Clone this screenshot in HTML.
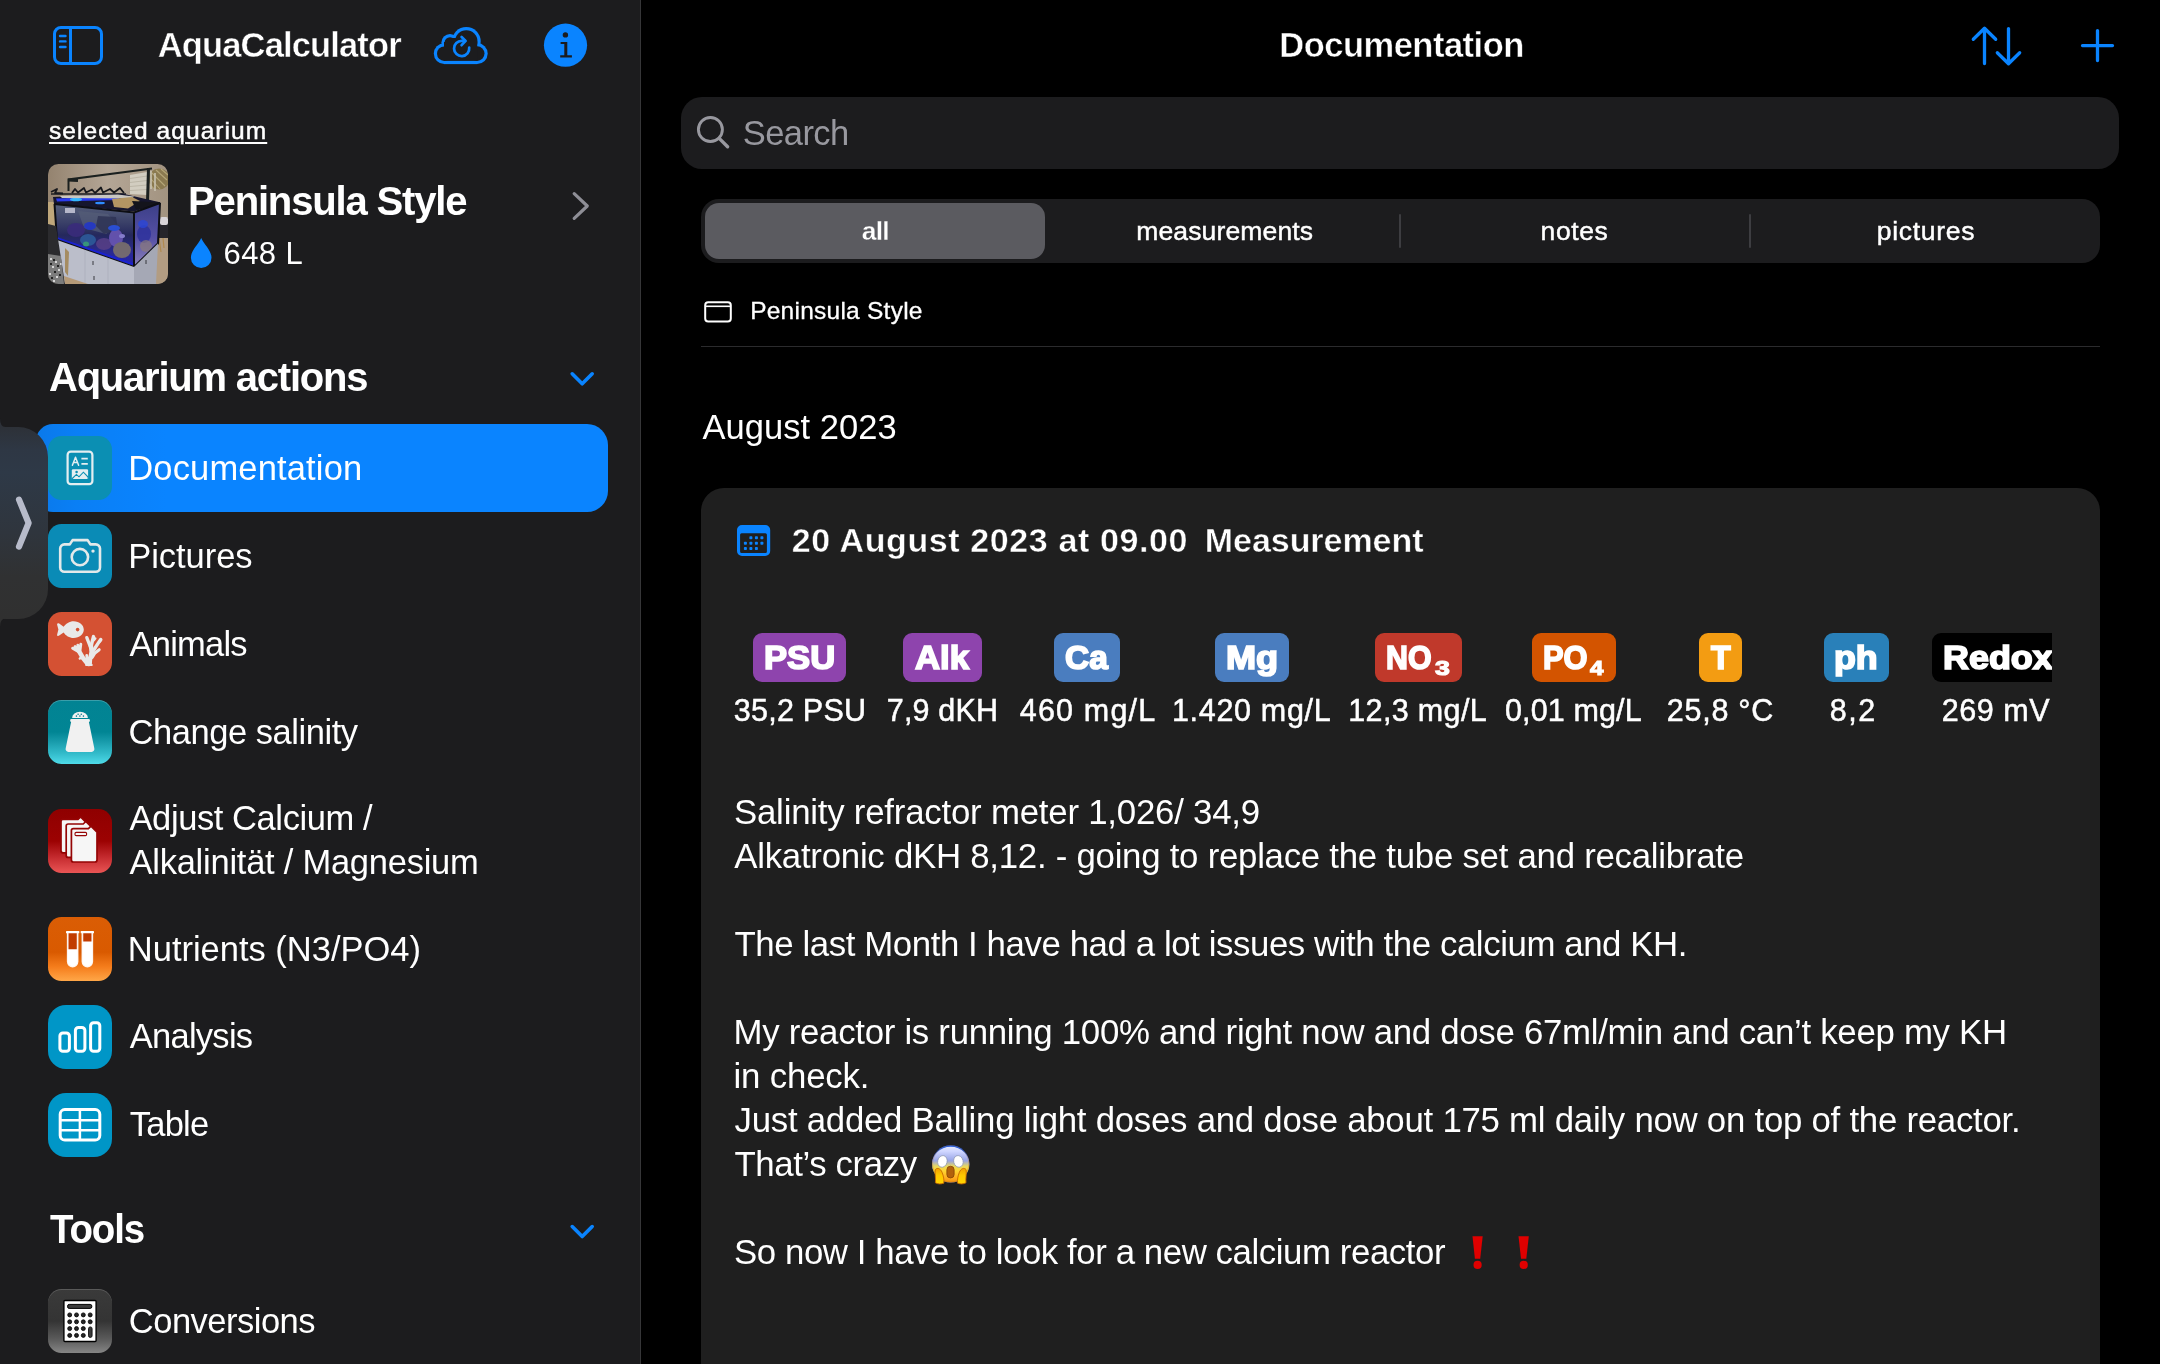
<!DOCTYPE html>
<html lang="en">
<head>
<meta charset="utf-8">
<title>AquaCalculator – Documentation</title>
<style>
*{box-sizing:border-box;margin:0;padding:0}
html,body{width:2160px;height:1364px;overflow:hidden;background:#000}
body{position:relative;font-family:"Liberation Sans",sans-serif;color:#fff}
.b{position:absolute}
.t{position:absolute;white-space:pre;line-height:1;transform-origin:0 50%;color:#fff}
#sb{left:0;top:0;width:640px;height:1364px;background:#1c1c1e}
#div{left:640px;top:0;width:1px;height:1364px;background:#363638}
#sel{left:35.5px;top:424px;width:572.5px;height:88px;border-radius:17px 21px 21px 17px;background:linear-gradient(90deg,#0a79ea 0,#0a7ff5 40px,#0a84ff 130px)}
#tab{left:-40px;top:427px;width:87.7px;height:191.5px;border-radius:30px;background:linear-gradient(180deg,#2d3138 0%,#2e3744 12%,#2e3947 24%,#2f353d 55%,#303132 78%,#303030 100%)}
.ic{position:absolute;left:48px;width:64px;height:64px;border-radius:13.5px}
#search{left:681px;top:97px;width:1438px;height:72px;border-radius:21px;background:#1c1c1e}
#seg{left:701px;top:199px;width:1399px;height:64px;border-radius:18px;background:#1c1c1e}
#segsel{left:705px;top:203px;width:340px;height:56px;border-radius:14px;background:#5b5b60}
.sd{position:absolute;top:213.5px;width:2px;height:34.5px;background:#3d3d41;border-radius:1px}
#sep{left:701px;top:346px;width:1399px;height:1px;background:#2b2b2d}
#card{left:701px;top:488px;width:1399px;height:900px;border-radius:23px;background:#1f1f1f}
#rowclip{left:0;top:0;width:2052px;height:1364px;overflow:hidden;will-change:transform}
#tx{left:0;top:0;width:2160px;height:1364px;will-change:transform}
.bd{position:absolute;top:633px;height:49px;border-radius:9px}
</style>
</head>
<body>
<!-- ================= SIDEBAR ================= -->
<div id="sb" class="b"></div>
<div id="div" class="b"></div>
<div id="sel" class="b"></div>
<div id="tab" class="b"></div>

<!-- icon tiles -->
<div class="ic" style="top:436px;background:#0b8fb3"></div>
<div class="ic" style="top:524px;background:#0a8bb6"></div>
<div class="ic" style="top:612px;background:#d45133"></div>
<div class="ic" style="top:700px;background:linear-gradient(180deg,#028393 0%,#018594 50%,#1a9dad 66%,#33bccb 84%,#4fdbe9 100%);box-shadow:inset 0 1px 0 rgba(255,255,255,.22)"></div>
<div class="ic" style="top:809px;background:linear-gradient(180deg,#8f0000 0%,#9c0202 50%,#c42a2e 75%,#ea5555 100%)"></div>
<div class="ic" style="top:917px;background:linear-gradient(180deg,#da5d05 0%,#d95a00 55%,#f57d1c 78%,#ffa748 100%)"></div>
<div class="ic" style="top:1005px;background:#0096c7;border-radius:18px"></div>
<div class="ic" style="top:1093px;background:#0096c7;border-radius:18px"></div>
<div class="ic" style="top:1289px;background:linear-gradient(180deg,#3a3a3a 0%,#343434 50%,#5a5a5a 78%,#868686 100%);box-shadow:inset 0 1px 0 rgba(255,255,255,.16)"></div>

<!-- ================= MAIN ================= -->
<div id="search" class="b"></div>
<div id="seg" class="b"></div>
<div id="segsel" class="b"></div>
<div class="sd" style="left:1399px"></div>
<div class="sd" style="left:1749px"></div>
<div id="sep" class="b"></div>
<div id="card" class="b"></div>

<!-- badges row (clipped at x=2052 like the horizontal scroller) -->
<div id="rowclip" class="b">
<div class="bd" style="left:753px;width:93px;background:#8e44ad"></div>
<div class="bd" style="left:903px;width:79px;background:#8e44ad"></div>
<div class="bd" style="left:1054px;width:66px;background:#4a7dbf"></div>
<div class="bd" style="left:1215px;width:74px;background:#4a7dbf"></div>
<div class="bd" style="left:1375px;width:87px;background:#c0392b"></div>
<div class="bd" style="left:1532px;width:84px;background:#d35400"></div>
<div class="bd" style="left:1699px;width:43px;background:#f39c12"></div>
<div class="bd" style="left:1824px;width:65px;background:#2980b9"></div>
<div class="bd" style="left:1932px;width:140px;background:#000"></div>
<div class="t" style="top:694.68px;font-size:30.5px;-webkit-text-stroke:0.5px currentColor;left:733.75px;letter-spacing:0.254px;">35,2 PSU</div>
<div class="t" style="top:694.68px;font-size:30.5px;-webkit-text-stroke:0.5px currentColor;left:886.75px;letter-spacing:0.187px;">7,9 dKH</div>
<div class="t" style="top:694.68px;font-size:30.5px;-webkit-text-stroke:0.5px currentColor;left:1019.75px;letter-spacing:1.185px;">460 mg/L</div>
<div class="t" style="top:694.68px;font-size:30.5px;-webkit-text-stroke:0.5px currentColor;left:1171.95px;letter-spacing:0.684px;">1.420 mg/L</div>
<div class="t" style="top:694.68px;font-size:30.5px;-webkit-text-stroke:0.5px currentColor;left:1348.25px;letter-spacing:0.353px;">12,3 mg/L</div>
<div class="t" style="top:694.68px;font-size:30.5px;-webkit-text-stroke:0.5px currentColor;left:1504.95px;letter-spacing:0.140px;">0,01 mg/L</div>
<div class="t" style="top:694.68px;font-size:30.5px;-webkit-text-stroke:0.5px currentColor;left:1666.75px;letter-spacing:0.745px;">25,8 °C</div>
<div class="t" style="top:694.68px;font-size:30.5px;-webkit-text-stroke:0.5px currentColor;left:1829.75px;letter-spacing:1.532px;">8,2</div>
<div class="t" style="top:694.68px;font-size:30.5px;-webkit-text-stroke:0.5px currentColor;left:1941.75px;letter-spacing:0.546px;">269 mV</div>
<div class="t" style="top:640.50px;font-size:33.2px;font-weight:700;-webkit-text-stroke:1.7px currentColor;left:763.80px;transform:scaleX(1.0429);">PSU</div>
<div class="t" style="top:640.50px;font-size:33.2px;font-weight:700;-webkit-text-stroke:1.7px currentColor;left:915.09px;transform:scaleX(1.0448);">Alk</div>
<div class="t" style="top:640.50px;font-size:33.2px;font-weight:700;-webkit-text-stroke:1.7px currentColor;left:1064.85px;transform:scaleX(1.0076);">Ca</div>
<div class="t" style="top:640.50px;font-size:33.2px;font-weight:700;-webkit-text-stroke:1.7px currentColor;left:1225.75px;transform:scaleX(1.0896);">Mg</div>
<div class="t" style="top:640.50px;font-size:33.2px;font-weight:700;-webkit-text-stroke:1.7px currentColor;left:1385.95px;transform:scaleX(0.9144);">NO</div>
<div class="t" style="top:640.50px;font-size:33.2px;font-weight:700;-webkit-text-stroke:1.7px currentColor;left:1542.93px;transform:scaleX(0.9288);">PO</div>
<div class="t" style="top:640.50px;font-size:33.2px;font-weight:700;-webkit-text-stroke:1.7px currentColor;left:1710.82px;transform:scaleX(0.9677);">T</div>
<div class="t" style="top:640.50px;font-size:33.2px;font-weight:700;-webkit-text-stroke:1.7px currentColor;left:1834.26px;transform:scaleX(1.0777);">ph</div>
<div class="t" style="top:640.50px;font-size:33.2px;font-weight:700;-webkit-text-stroke:1.7px currentColor;left:1942.76px;transform:scaleX(1.0819);">Redox</div>
<div class="t" style="top:657.85px;font-size:20.5px;font-weight:700;-webkit-text-stroke:1.1px currentColor;left:1434.92px;transform:scaleX(1.3058);">3</div>
<div class="t" style="top:657.85px;font-size:20.5px;font-weight:700;-webkit-text-stroke:1.1px currentColor;left:1590.25px;transform:scaleX(1.1756);">4</div>
</div>

<!-- ================= ICONS (page coordinates) ================= -->
<svg class="b" style="left:0;top:0" width="2160" height="1364" viewBox="0 0 2160 1364" fill="none">
<!-- aquarium thumbnail (vector approximation of the photo) -->
<defs>
<clipPath id="emc"><circle cx="950.7" cy="1163.9" r="18.7"/></clipPath>
<clipPath id="thc"><rect x="0" y="0" width="120" height="120" rx="10.5"/></clipPath>
<linearGradient id="wall" x1="0" y1="0" x2="1" y2="0"><stop offset="0" stop-color="#94836f"/><stop offset=".5" stop-color="#b4a696"/><stop offset="1" stop-color="#a29380"/></linearGradient>
<linearGradient id="glassF" x1="0" y1="0" x2="0" y2="1"><stop offset="0" stop-color="#56607a"/><stop offset=".3" stop-color="#3a4068"/><stop offset=".5" stop-color="#25285c"/><stop offset=".78" stop-color="#2a2a92"/><stop offset="1" stop-color="#2422b0"/></linearGradient>
<linearGradient id="glassS" x1="0" y1="0" x2="0" y2="1"><stop offset="0" stop-color="#3b3f86"/><stop offset=".55" stop-color="#5650a6"/><stop offset="1" stop-color="#8a80b8"/></linearGradient>
<linearGradient id="emo" x1="0" y1="0" x2="0" y2="1"><stop offset="0" stop-color="#e4e8ff"/><stop offset=".12" stop-color="#cfd6ff"/><stop offset=".36" stop-color="#98a4e6"/><stop offset=".5" stop-color="#e8d860"/><stop offset=".62" stop-color="#ffd632"/><stop offset=".82" stop-color="#ffa81e"/><stop offset="1" stop-color="#e07c08"/></linearGradient>
<linearGradient id="hand" x1="0" y1="0" x2="0" y2="1"><stop offset="0" stop-color="#f2a000"/><stop offset=".45" stop-color="#ffc800"/><stop offset="1" stop-color="#ffd400"/></linearGradient>
</defs>
<g transform="translate(48 164)" clip-path="url(#thc)">
<rect width="120" height="120" fill="url(#wall)"/>
<!-- floor right + right furniture -->
<path d="M106 72L120 66V120H104Z" fill="#b29c82"/>
<rect x="110" y="54" width="10" height="20" fill="#25242a"/><rect x="112" y="53" width="8" height="8" rx="2" fill="#d8d4d8"/>
<path d="M111 74L113 88M115 74L116 84" stroke="#b08a50" stroke-width="1.2"/>
<!-- blind + wicker ball -->
<path d="M82 11L99 8V31L82 30Z" fill="#d2cdc0"/>
<path d="M82 14.500L99 12M82 18.500L99 16.500M82 22.500L99 21M82 26.500L99 25.500" stroke="#b9b3a4" stroke-width=".9"/>
<circle cx="111" cy="15" r="10.500" fill="#8b7a50"/>
<path d="M104 9L117 22M103 15L112 25M108 6L119 16M102 20L106 25M113 5L120 11" stroke="#b5a678" stroke-width="1.1"/>
<path d="M103 7V25M107 9V27" stroke="#c9c3b2" stroke-width="1.6"/>
<!-- light frame -->
<path d="M20.500 27V15.500L104 4.500" stroke="#1b201f" stroke-width="2" fill="none"/>
<path d="M100.500 4L99.500 38" stroke="#1b201f" stroke-width="3"/>
<path d="M20 16L30 16.500" stroke="#1b201f" stroke-width="3"/>
<!-- clutter on top -->
<path d="M3 28L9 25L7 29L15 29.500M24 29L27 25L30 28.500L36 24L38 28.500L44 25.500L47 29L53 23.500L55 28.500L62 25L66 28.500L72 24L76 29" stroke="#17181c" stroke-width="1.8" fill="none" stroke-linejoin="round"/>
<path d="M3 30H78" stroke="#1a1b20" stroke-width="1.6"/>
<!-- cardboard left -->
<rect x="0" y="38" width="8" height="24" fill="#bfa77b"/>
<!-- tank top -->
<path d="M5 33L74 29.500L113 38.500L86 47.500L6 40Z" fill="#16162e"/>
<path d="M8 34.500L72 32.500L70 36L9 37.500Z" fill="#2b3cf0"/>
<ellipse cx="28" cy="35.500" rx="6" ry="1.800" fill="#33b6ff"/><ellipse cx="52" cy="39" rx="5" ry="1.300" fill="#2f8cff"/>
<path d="M12 32L70 30.500L86 32.500L84 34.500L14 34Z" fill="#c9c6c0"/>
<path d="M64 35L84 33L92 37L80 44.500L66 43Z" fill="#b39563"/>
<path d="M84 37L112 38.500L100 44L88 45.500Z" fill="#14141c"/>
<!-- front glass -->
<path d="M6.500 40L86 48.500V102L9 75Z" fill="url(#glassF)"/>
<path d="M30 47L60 50L70 62L58 70L36 64Z" fill="#555e78" opacity=".7"/>
<path d="M50 52L68 53L70 66L56 70L48 62Z" fill="#2c3152" opacity=".8"/>
<g opacity=".9">
<ellipse cx="28" cy="66" rx="9" ry="7" fill="#3a2c7c"/><ellipse cx="40" cy="76" rx="8" ry="6" fill="#2e5a9a"/><ellipse cx="42" cy="62" rx="6" ry="4" fill="#2337c8"/>
<ellipse cx="56" cy="80" rx="8" ry="6" fill="#563f86"/><ellipse cx="68" cy="74" rx="7" ry="9" fill="#6a56b4"/><ellipse cx="74" cy="86" rx="9" ry="8" fill="#7c706c"/>
<ellipse cx="66" cy="64" rx="6" ry="3" fill="#2a52e0"/><ellipse cx="38" cy="80" rx="3" ry="2.500" fill="#3aa07a"/><ellipse cx="74" cy="72" rx="3" ry="2" fill="#8f86d8"/>
</g>
<path d="M9 73L86 99.500V102L9 75.500Z" fill="#1a22d0"/>
<!-- side glass -->
<path d="M86 48.500L112 39L110 79L86 102Z" fill="url(#glassS)"/>
<ellipse cx="96" cy="70" rx="7" ry="9" fill="#2b2f9c" opacity=".8"/><ellipse cx="98" cy="82" rx="6" ry="6" fill="#8a7a7a" opacity=".7"/><ellipse cx="95" cy="60" rx="5" ry="4" fill="#2a46d8" opacity=".8"/>
<!-- tank frame -->
<path d="M6.500 40L86 48.500L112 39M86 48.500V103M6.500 40L9 76L86 103L110 79.500L112 39" stroke="#0d0e14" stroke-width="2" fill="none" stroke-linejoin="round"/>
<rect x="17" y="44" width="10" height="5" fill="#cfd0e0" opacity=".8"/>
<!-- cabinet -->
<path d="M9 76L86 103V120H15Z" fill="#bbbeca"/>
<path d="M86 103L110 79.500L108 120H86Z" fill="#a5a8b5"/>
<path d="M37 86V120M60 94V120" stroke="#aeb1be" stroke-width="1"/>
<path d="M45 97V101M46 112V116M98 96V100" stroke="#2a2b30" stroke-width=".9"/>
<!-- left dark + carpet -->
<path d="M0 60L8 62L12 88L17 120H0Z" fill="#2b2b2e"/>
<path d="M0 90L13 92L16 120H0Z" fill="#7c7c7c"/>
<g fill="#d6d6d6"><rect x="2" y="94" width="2" height="2"/><rect x="7" y="97" width="2" height="2"/><rect x="4" y="102" width="2" height="2"/><rect x="10" y="105" width="2" height="2"/><rect x="1" y="109" width="2" height="2"/><rect x="8" y="112" width="2" height="2"/><rect x="5" y="116" width="2" height="2"/><rect x="12" y="99" width="1.500" height="2"/></g>
<g fill="#222"><rect x="5" y="95" width="2" height="2"/><rect x="2" y="99" width="2" height="2"/><rect x="9" y="101" width="2" height="2"/><rect x="6" y="107" width="2" height="2"/><rect x="11" y="110" width="2" height="2"/><rect x="3" y="113" width="2" height="2"/></g>
<path d="M17 84L21 88L20 112L17 108Z" fill="#a58c62"/>
<path d="M16 112L40 120H17Z" fill="#b59a78"/>
</g>
<!-- scream emoji -->
<g>
<circle cx="950.7" cy="1163.9" r="18.7" fill="#0e5cff"/>
<g clip-path="url(#emc)"><ellipse cx="950.7" cy="1166.2" rx="19.6" ry="19.4" fill="url(#emo)"/></g>
<circle cx="950.7" cy="1163.9" r="18.2" fill="none" stroke="#c46a08" stroke-opacity=".35" stroke-width="1"/>
<ellipse cx="942.4" cy="1161.4" rx="4.7" ry="5.9" transform="rotate(14 942.4 1161.4)" fill="#fff" stroke="#8a94b0" stroke-width=".7"/>
<ellipse cx="958.4" cy="1161.4" rx="4.7" ry="5.9" transform="rotate(-14 958.4 1161.4)" fill="#fff" stroke="#8a94b0" stroke-width=".7"/>
<rect x="946.9" y="1166.3" width="7.2" height="11.6" rx="3.4" fill="#b2610c" stroke="#8c4a06" stroke-width=".9"/>
<path d="M935.3 1169.6C937.3 1167.2 940.6 1168.6 942 1172.2C943.6 1176 944.2 1180 943.8 1183.2C941 1184.2 938 1184.2 935.4 1182.8C936 1178.6 934.6 1173.6 935.3 1169.6Z" fill="url(#hand)" stroke="#c86a00" stroke-width=".9"/>
<path d="M966.1 1169.6C964.1 1167.2 960.8 1168.6 959.4 1172.2C957.8 1176 957.2 1180 957.6 1183.2C960.4 1184.2 963.4 1184.2 966 1182.8C965.4 1178.6 966.8 1173.6 966.1 1169.6Z" fill="url(#hand)" stroke="#c86a00" stroke-width=".9"/>
</g>
<!-- tab ears -->
<path d="M0 418.5Q0 427 5.5 427H0Z" fill="#2d3138"/><path d="M0 627Q0 618.5 5.500 618.5H0Z" fill="#303030"/>
<!-- sidebar toggle -->
<g stroke="#0a84ff" stroke-linecap="round">
<rect x="54.5" y="27.5" width="47" height="36" rx="6.5" stroke-width="3"/>
<path d="M70.5 27.5V63.5" stroke-width="3"/>
<path d="M60 36H65.5M60 41.4H65.5M60 47H65.5" stroke-width="2.4"/>
</g>
<!-- cloud sync -->
<g fill="#0a84ff">
<circle cx="444.2" cy="53.7" r="10.4"/><circle cx="450" cy="42.6" r="8.6"/><circle cx="466.3" cy="41.4" r="14.4"/><circle cx="477.2" cy="53.6" r="10.5"/>
<rect x="444" y="44" width="33.2" height="20.1"/>
</g>
<g fill="#1c1c1e">
<circle cx="444.2" cy="53.7" r="7.2"/><circle cx="450" cy="42.6" r="5.4"/><circle cx="466.3" cy="41.4" r="11.2"/><circle cx="477.2" cy="53.6" r="7.3"/>
<rect x="444" y="42" width="33.2" height="18.9"/>
<rect x="448" y="38" width="24" height="10"/>
</g>
<g stroke="#0a84ff" stroke-width="2.7" stroke-linecap="round" stroke-linejoin="round">
<path d="M469.2 47.6A7.6 7.6 0 1 1 461.9 40.9H465"/>
<path d="M461.6 37L465.6 40.9L461.6 45.2"/>
</g>
<!-- info -->
<circle cx="565.5" cy="45.2" r="21.6" fill="#0a84ff"/>
<g fill="#1c1c1e">
<circle cx="565.4" cy="34.9" r="2.7"/>
<path d="M560.6 41.9H567.3V55.2H571.9V57.5H560.2V55.2H564.3V44.1H560.6Z"/>
</g>
<!-- water drop -->
<path d="M201.2 238C204.6 245.2 211.5 250.6 211.5 257.7A10.3 10.3 0 0 1 190.9 257.7C190.9 250.6 197.8 245.2 201.2 238Z" fill="#0a84ff"/>
<!-- chevrons -->
<path d="M574.2 193.6L587.3 206L574.2 218.4" stroke="#8e8e96" stroke-width="3.2" stroke-linecap="round" stroke-linejoin="round"/>
<path d="M572.2 373.8L582.2 383.8L592.2 373.8" stroke="#0a84ff" stroke-width="3.6" stroke-linecap="round" stroke-linejoin="round"/>
<path d="M572.2 1226.6L582.2 1236.6L592.2 1226.6" stroke="#0a84ff" stroke-width="3.6" stroke-linecap="round" stroke-linejoin="round"/>
<path d="M19 499.6L28.6 523L19 546.6" stroke="#b7bbca" stroke-width="6.2" stroke-linecap="round" stroke-linejoin="round"/>
<!-- sort arrows + plus -->
<g stroke="#0a84ff" stroke-width="3.3" stroke-linecap="round" stroke-linejoin="round">
<path d="M1984.5 63.6V28.6M1973.3 39.3L1984.5 28.3L1995.7 39.3"/>
<path d="M2008.5 28.6V63.6M1997.3 52.7L2008.5 63.7L2019.7 52.7"/>
<path d="M2082.5 45.6H2112.5M2097.5 30.6V60.6"/>
</g>
<!-- search magnifier -->
<g stroke="#98989f" stroke-linecap="round">
<circle cx="710.4" cy="129.5" r="12" stroke-width="2.9"/>
<path d="M719.2 138.4L727.6 146.8" stroke-width="3.4"/>
</g>
<!-- folder/window glyph -->
<g stroke="#fff">
<rect x="705.2" y="302.3" width="25.6" height="19.2" rx="3" stroke-width="2"/>
<path d="M705.2 306.3H730.8" stroke-width="1.6"/>
</g>
<!-- calendar -->
<path fill-rule="evenodd" fill="#0a84ff" d="M742 525H765.2A5 5 0 0 1 770.2 530V551A5 5 0 0 1 765.2 556H742A5 5 0 0 1 737 551V530A5 5 0 0 1 742 525ZM741.6 533.2A1.5 1.5 0 0 0 740.1 534.7V551.4A1.5 1.5 0 0 0 741.6 552.9H765.4A1.5 1.5 0 0 0 766.9 551.4V534.7A1.5 1.5 0 0 0 765.4 533.2Z"/>
<g fill="#0a84ff">
<rect x="749.4" y="536.2" width="3" height="3" rx=".8"/><rect x="754.9" y="536.2" width="3" height="3" rx=".8"/><rect x="760.4" y="536.2" width="3" height="3" rx=".8"/>
<rect x="743.9" y="541.7" width="3" height="3" rx=".8"/><rect x="749.4" y="541.7" width="3" height="3" rx=".8"/><rect x="754.9" y="541.7" width="3" height="3" rx=".8"/><rect x="760.4" y="541.7" width="3" height="3" rx=".8"/>
<rect x="743.9" y="547.1" width="3" height="3" rx=".8"/><rect x="749.4" y="547.1" width="3" height="3" rx=".8"/><rect x="754.9" y="547.1" width="3" height="3" rx=".8"/>
</g>
<!-- red exclamation marks -->
<g fill="#e00000">
<path d="M1472.5 1236.3H1482.7L1480.2 1258.8H1474.9Z"/><circle cx="1477.6" cy="1264.9" r="4.1"/>
<path d="M1518.5 1236.3H1528.8L1526.3 1258.8H1521Z"/><circle cx="1523.7" cy="1264.9" r="4.1"/>
</g>
<!-- documentation glyph -->
<g stroke="#e4eef1" fill="none">
<rect x="67.6" y="451.7" width="24.8" height="32.5" rx="3.2" stroke-width="2.2"/>
<path d="M72.4 465.2L75.5 457.2L78.6 465.2M73.5 462.6H77.5" stroke-width="1.5" stroke-linejoin="round" stroke-linecap="round"/>
<path d="M81.4 458.6H87.8M81.4 463.9H87.8" stroke-width="1.7"/>
</g>
<path d="M73 469.2H86.9A1.2 1.2 0 0 1 88.1 470.4V479H71.8V470.4A1.2 1.2 0 0 1 73 469.2Z" fill="#e4eef1"/>
<path d="M71.8 479L76.4 474.4L79 476.8L83.4 472.2L88.1 477V479.6H71.8Z" fill="#e4eef1" stroke="#0b8fb3" stroke-width="1.1"/>
<circle cx="76.6" cy="472" r="1.3" fill="#0b8fb3"/>
<!-- camera -->
<g stroke="#e3e9ea" stroke-width="2.6" fill="none" stroke-linejoin="round">
<path d="M64.4 544.4H69.8L72.6 540.1H87.6L90.4 544.4H95.8A4.2 4.2 0 0 1 100 548.6V567.5A4.2 4.2 0 0 1 95.8 571.7H64.4A4.2 4.2 0 0 1 60.2 567.5V548.6A4.2 4.2 0 0 1 64.4 544.4Z"/>
<circle cx="79.9" cy="557.1" r="8.2"/>
</g>
<circle cx="93" cy="551.1" r="1.7" fill="#e3e9ea"/>
<!-- fish + coral -->
<g fill="#e9e9e9">
<path d="M83.8 629.6C83.8 634.3 79.4 637.9 73.6 637.9C69.4 637.9 65.6 635.4 63.6 632.4L59.2 635.6C57.6 636.5 56.8 635.6 57.2 634.2L58.4 629.6L57.2 625C56.8 623.6 57.6 622.7 59.2 623.6L63.6 626.8C65.6 623.8 69.4 621.2 73.6 621.2C79.4 621.2 83.8 624.9 83.8 629.6Z"/>
</g>
<circle cx="77.6" cy="629.6" r="1.8" fill="#d45133"/>
<g stroke="#e9e9e9" stroke-linecap="round" stroke-linejoin="round" fill="none">
<path d="M86.400 664.900H91.500" stroke-width="2.400"/>
<path d="M88.800 663L88.900 660" stroke-width="6.400"/>
<path d="M89.600 661.500L91.600 652L91 646" stroke-width="4.400"/>
<path d="M91 646.500L93.500 636.600" stroke-width="3.500"/>
<path d="M93.600 640.400L95.300 638.400" stroke-width="2.400"/>
<path d="M90.600 647.500L86.800 637.600" stroke-width="3.300"/>
<path d="M91.600 653.500L96 646.500L100.700 639.400" stroke-width="3.300"/>
<path d="M100 641.500L101.200 640" stroke-width="2.400"/>
<path d="M92.200 657.500L95 653L99.200 649.700" stroke-width="3"/>
<path d="M78.800 650.800L83 658L87 663" stroke-width="4.500"/>
<path d="M77.800 651.200L72.600 648.200M78.200 650.600L75 646.600M78.800 650.200L77.800 645.200M80 650.600L80.800 644.200" stroke-width="2.900"/>
<path d="M81.800 657.200L79.800 658.600" stroke-width="2.400"/>
<path d="M87.400 661L86.700 655.400" stroke-width="2.800"/>
</g>
<!-- salt shaker -->
<g fill="#f1f1f1">
<path d="M72.1 717.9A7.9 6.1 0 0 1 87.9 717.9Z"/>
<rect x="70.2" y="719" width="19.7" height="3" rx="1.2"/>
<path d="M71.2 721.4H88.8L94.3 748.3A2.8 2.8 0 0 1 91.5 751.9H68.5A2.8 2.8 0 0 1 65.7 748.3Z"/>
</g>
<g fill="#0a7f90"><circle cx="78.1" cy="714.3" r=".8"/><circle cx="81.3" cy="714.3" r=".8"/><circle cx="76.4" cy="716.1" r=".8"/><circle cx="79.900" cy="716.1" r=".8"/><circle cx="83.4" cy="716.1" r=".8"/></g>
<!-- canisters -->
<g fill="#f6f6f6" stroke="#950505" stroke-width="1.7" stroke-linejoin="round">
<path d="M63 819.4H78L80.6 816.9L86.6 822.9V850.8A2 2 0 0 1 84.6 852.8H63A2 2 0 0 1 61 850.8V821.4A2 2 0 0 1 63 819.4Z"/>
<path d="M68.2 824H83.2L85.8 821.5L91.8 827.5V855.4A2 2 0 0 1 89.8 857.4H68.2A2 2 0 0 1 66.2 855.4V826A2 2 0 0 1 68.2 824Z"/>
<path d="M73.4 828.6H88.4L91 826.1L97 832.1V860A2 2 0 0 1 95 862H73.4A2 2 0 0 1 71.4 860V830.6A2 2 0 0 1 73.4 828.6Z"/>
<rect x="75" y="832.4" width="11.6" height="3.2" rx="1.2" stroke-width="1.1"/>
</g>
<!-- test tubes -->
<g>
<path d="M67.7 933V961.6A4.95 4.95 0 0 0 77.6 961.6V933Z" fill="rgba(170,30,0,.5)"/>
<path d="M82.4 933V961.6A4.95 4.95 0 0 0 92.3 961.6V933Z" fill="rgba(170,30,0,.5)"/>
<path d="M67.7 949.2H77.6V961.6A4.95 4.95 0 0 1 67.7 961.6Z" fill="#fff"/>
<path d="M82.4 941.6H92.3V961.6A4.95 4.95 0 0 1 82.4 961.6Z" fill="#fff"/>
<path d="M67.7 933V961.6A4.95 4.95 0 0 0 77.6 961.6V933M82.4 933V961.6A4.95 4.95 0 0 0 92.3 961.6V933" stroke="#fff" stroke-opacity=".92" stroke-width="1.7"/>
<rect x="66" y="931" width="13.3" height="2.3" rx=".6" fill="#fff"/><rect x="80.7" y="931" width="13.3" height="2.3" rx=".6" fill="#fff"/>
</g>
<!-- analysis bars -->
<g stroke="#fff" stroke-width="3">
<rect x="59.9" y="1033" width="9.5" height="18.2" rx="3"/>
<rect x="75.4" y="1027.4" width="9.5" height="23.8" rx="3"/>
<rect x="90.6" y="1022.7" width="9.2" height="28.5" rx="3"/>
</g>
<!-- table -->
<g stroke="#fff">
<rect x="60.2" y="1109.6" width="39.6" height="30.4" rx="4.6" stroke-width="3"/>
<path d="M60.2 1120.2H99.8M60.2 1130.3H99.8M79.9 1109.6V1140" stroke-width="2.5"/>
</g>
<!-- calculator -->
<rect x="63.9" y="1300.5" width="32.2" height="41" rx="1" fill="#fff" stroke="#000" stroke-width="1.4"/>
<rect x="67.6" y="1304.4" width="24.2" height="4" rx="1.6" fill="#3a3a3a" stroke="#000" stroke-width="1"/>
<g fill="#262626" stroke="#000" stroke-width=".8">
<circle cx="69.7" cy="1314.9" r="2"/><circle cx="76.5" cy="1314.9" r="2"/><circle cx="83.3" cy="1314.9" r="2"/><circle cx="90.2" cy="1314.9" r="2"/>
<circle cx="69.7" cy="1321.8" r="2"/><circle cx="76.5" cy="1321.8" r="2"/><circle cx="83.3" cy="1321.8" r="2"/><circle cx="90.2" cy="1321.8" r="2"/>
<circle cx="69.7" cy="1328.6" r="2"/><circle cx="76.5" cy="1328.6" r="2"/><circle cx="83.3" cy="1328.6" r="2"/>
<circle cx="69.7" cy="1335.4" r="2"/><circle cx="76.5" cy="1335.4" r="2"/><circle cx="83.3" cy="1335.4" r="2"/>
<rect x="88.5" y="1326.9" width="3.6" height="10.6" rx="1.8" fill="#3a3a3a"/>
</g>

</svg>

<!-- ================= TEXT ================= -->
<div id="tx" class="b">
<div class="t" style="top:28.00px;font-size:34.5px;font-weight:700;-webkit-text-stroke:0.45px #1c1c1e;left:157.78px;letter-spacing:-0.853px;">AquaCalculator</div>
<div class="t" style="top:118.76px;font-size:24.5px;-webkit-text-stroke:0.5px currentColor;left:49.00px;letter-spacing:1.060px;text-decoration:underline;text-decoration-thickness:1.8px;text-underline-offset:3.2px;">selected aquarium</div>
<div class="t" style="top:179.87px;font-size:41.5px;font-weight:700;left:188.07px;letter-spacing:-1.245px;transform:scaleX(0.9660);">Peninsula Style</div>
<div class="t" style="top:237.76px;font-size:31px;left:223.50px;letter-spacing:0.416px;">648 L</div>
<div class="t" style="top:356.07px;font-size:41.5px;font-weight:700;left:48.54px;letter-spacing:-1.245px;transform:scaleX(0.9629);">Aquarium actions</div>
<div class="t" style="top:450.60px;font-size:34.5px;left:128.30px;letter-spacing:0.153px;">Documentation</div>
<div class="t" style="top:538.80px;font-size:34.5px;left:128.30px;letter-spacing:-0.054px;">Pictures</div>
<div class="t" style="top:626.60px;font-size:34.5px;left:129.50px;letter-spacing:-0.776px;">Animals</div>
<div class="t" style="top:714.60px;font-size:34.5px;left:128.50px;letter-spacing:-0.453px;">Change salinity</div>
<div class="t" style="top:800.80px;font-size:34.5px;left:129.50px;letter-spacing:-0.411px;">Adjust Calcium /</div>
<div class="t" style="top:844.60px;font-size:34.5px;left:129.50px;letter-spacing:-0.250px;">Alkalinität / Magnesium</div>
<div class="t" style="top:931.60px;font-size:34.5px;left:127.80px;letter-spacing:-0.009px;">Nutrients (N3/PO4)</div>
<div class="t" style="top:1019.40px;font-size:34.5px;left:129.80px;letter-spacing:-0.745px;">Analysis</div>
<div class="t" style="top:1107.40px;font-size:34.5px;left:129.80px;letter-spacing:-0.797px;">Table</div>
<div class="t" style="top:1303.60px;font-size:34.5px;left:128.80px;letter-spacing:-0.500px;">Conversions</div>
<div class="t" style="top:1208.07px;font-size:41.5px;font-weight:700;left:49.50px;letter-spacing:-1.245px;transform:scaleX(0.9269);">Tools</div>
<div class="t" style="top:27.80px;font-size:34.5px;font-weight:700;-webkit-text-stroke:0.45px #000;left:1279.28px;letter-spacing:-0.505px;">Documentation</div>
<div class="t" style="top:115.80px;font-size:34.5px;color:#98989f;left:742.75px;letter-spacing:-0.575px;">Search</div>
<div class="t" style="top:217.57px;font-size:26.5px;font-weight:700;-webkit-text-stroke:0.3px #5b5b60;left:861.70px;letter-spacing:-0.750px;">all</div>
<div class="t" style="top:217.57px;font-size:26.5px;-webkit-text-stroke:0.45px currentColor;left:1136.22px;letter-spacing:0.140px;">measurements</div>
<div class="t" style="top:217.57px;font-size:26.5px;-webkit-text-stroke:0.45px currentColor;left:1540.57px;letter-spacing:0.618px;">notes</div>
<div class="t" style="top:217.57px;font-size:26.5px;-webkit-text-stroke:0.45px currentColor;left:1876.72px;letter-spacing:0.716px;">pictures</div>
<div class="t" style="top:298.76px;font-size:24.5px;-webkit-text-stroke:0.3px currentColor;left:750.15px;letter-spacing:0.246px;">Peninsula Style</div>
<div class="t" style="top:409.50px;font-size:34.5px;left:702.50px;letter-spacing:0.044px;">August 2023</div>
<div class="t" style="top:523.22px;font-size:34px;font-weight:700;-webkit-text-stroke:0.45px #1f1f1f;left:791.77px;letter-spacing:0.601px;">20 August 2023 at 09.00</div>
<div class="t" style="top:523.22px;font-size:34px;font-weight:700;-webkit-text-stroke:0.45px #1f1f1f;left:1204.78px;letter-spacing:-0.042px;">Measurement</div>
<div class="t" style="top:794.54px;font-size:34.8px;left:734.00px;letter-spacing:-0.219px;">Salinity refractor meter 1,026/ 34,9</div>
<div class="t" style="top:838.54px;font-size:34.8px;left:734.30px;letter-spacing:-0.259px;">Alkatronic dKH 8,12. - going to replace the tube set and recalibrate</div>
<div class="t" style="top:926.54px;font-size:34.8px;left:734.50px;letter-spacing:-0.415px;">The last Month I have had a lot issues with the calcium and KH.</div>
<div class="t" style="top:1014.54px;font-size:34.8px;left:733.50px;letter-spacing:-0.285px;">My reactor is running 100% and right now and dose 67ml/min and can’t keep my KH</div>
<div class="t" style="top:1058.54px;font-size:34.8px;left:733.50px;letter-spacing:-0.169px;">in check.</div>
<div class="t" style="top:1102.54px;font-size:34.8px;left:734.50px;letter-spacing:-0.256px;">Just added Balling light doses and dose about 175 ml daily now on top of the reactor.</div>
<div class="t" style="top:1146.54px;font-size:34.8px;left:734.50px;letter-spacing:-0.385px;">That’s crazy</div>
<div class="t" style="top:1234.54px;font-size:34.8px;left:734.00px;letter-spacing:-0.424px;">So now I have to look for a new calcium reactor</div>
</div>
</body>
</html>
